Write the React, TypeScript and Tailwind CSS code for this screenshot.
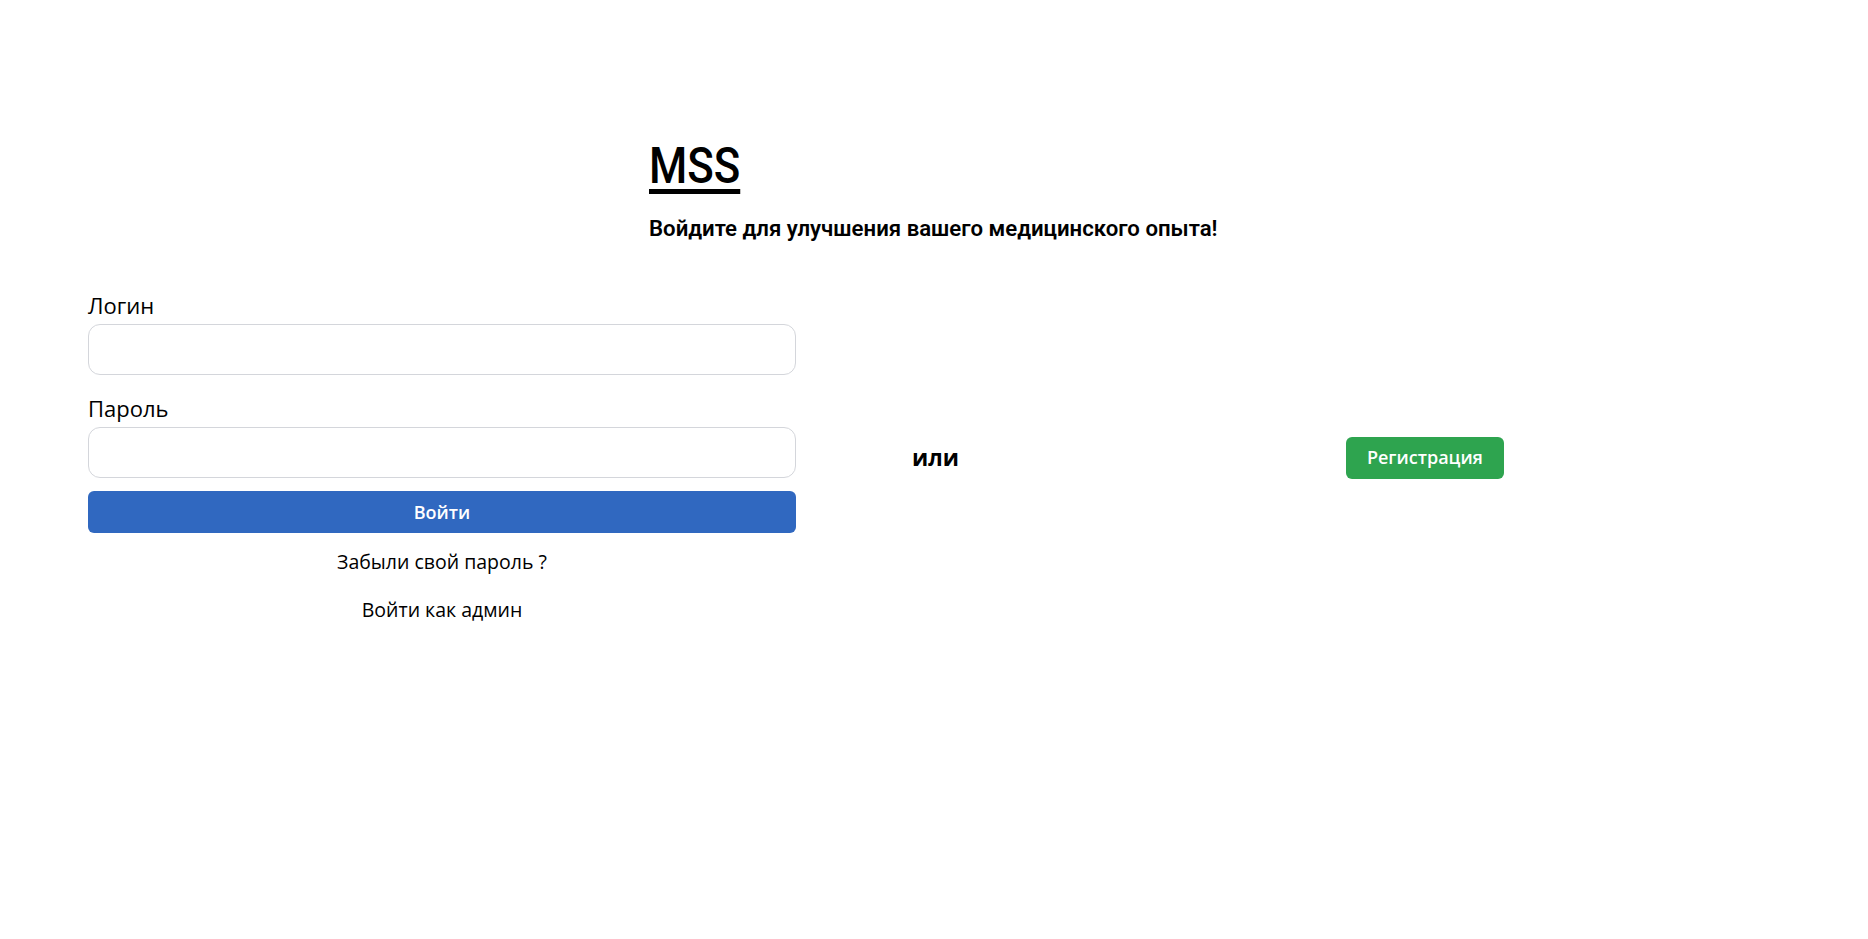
import React from "react";

export default function App() {
  return (
    <div className="min-h-screen w-full bg-white text-black" style={{ fontFamily: '"Open Sans", "Noto Sans", sans-serif' }}>
      <div className="pt-[136px] pl-[649px]">
        <h1 className="inline-block origin-left scale-x-[0.875] text-[50px] leading-[60px] font-medium underline decoration-[5px] underline-offset-[6px] font-['Roboto',sans-serif]">MSS</h1>
        <p className="mt-[18px] text-[22.2px] leading-[28px] font-semibold font-['Roboto',sans-serif]">
          Войдите для улучшения вашего медицинского опыта!
        </p>
      </div>
      <div className="mt-[50px] flex items-center">
        <div className="ml-[88px] w-[708px] flex flex-col">
          <label className="text-[22px] leading-[26px] font-medium">Логин</label>
          <input className="mt-[6px] h-[51px] w-full rounded-[12px] border border-[#d4d6db] outline-none px-3" />
          <label className="mt-[20px] text-[22px] leading-[26px] font-medium">Пароль</label>
          <input type="password" className="mt-[6px] h-[51px] w-full rounded-[12px] border border-[#d4d6db] outline-none px-3" />
          <button className="mt-[13px] h-[42px] w-full rounded-[6px] bg-[#3068c0] text-white text-[18px] font-semibold">
            Войти
          </button>
          <a className="mt-[16px] text-center text-[19.5px] leading-[26px] cursor-pointer">Забыли свой пароль ?</a>
          <a className="mt-[22px] text-center text-[19.5px] leading-[26px] cursor-pointer">Войти как админ</a>
        </div>
        <div className="ml-[116px] text-[22.5px] font-bold leading-[28px]">или</div>
        <button className="ml-[387px] h-[42px] px-[21px] rounded-[6px] bg-[#2ea44f] text-white text-[18px] font-semibold">
          Регистрация
        </button>
      </div>
    </div>
  );
}
